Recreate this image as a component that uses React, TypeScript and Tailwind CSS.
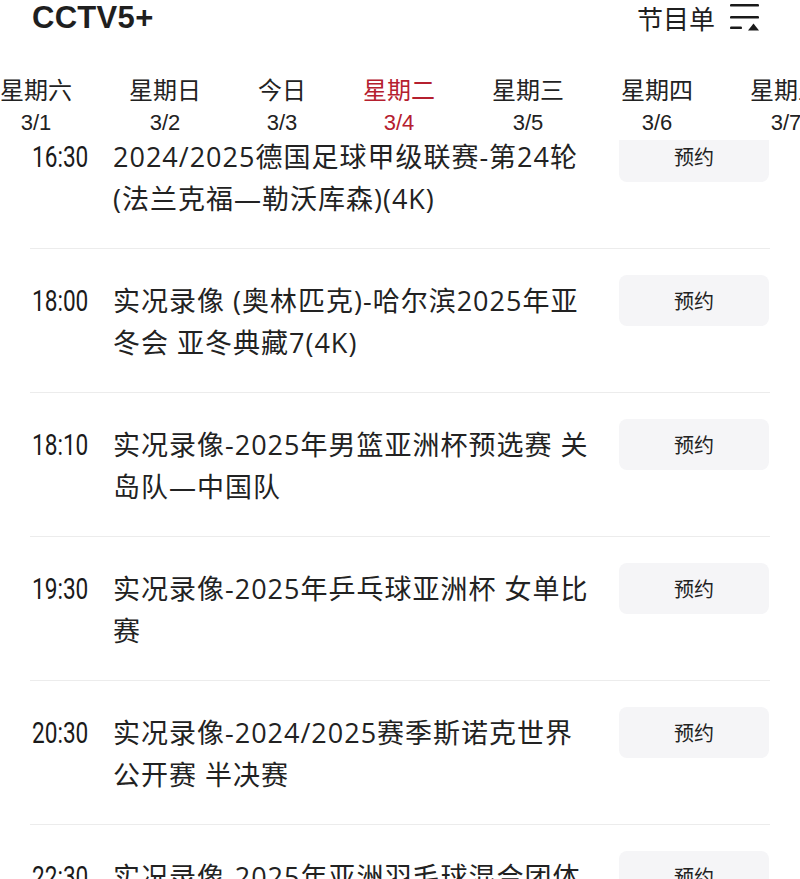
const cjk = "font-['Noto_Sans_CJK_SC',sans-serif]";
const title = "font-['Open_Sans','Noto_Sans_CJK_SC',sans-serif]";

const days = [
  { label: "星期六", date: "3/1" },
  { label: "星期日", date: "3/2" },
  { label: "今日", date: "3/3" },
  { label: "星期二", date: "3/4", active: true },
  { label: "星期三", date: "3/5" },
  { label: "星期四", date: "3/6" },
  { label: "星期五", date: "3/7" },
];

const programs = [
  { time: "16:30", lines: ["2024/2025德国足球甲级联赛-第24轮", "(法兰克福—勒沃库森)(4K)"] },
  { time: "18:00", lines: ["实况录像 (奥林匹克)-哈尔滨2025年亚", "冬会 亚冬典藏7(4K)"] },
  { time: "18:10", lines: ["实况录像-2025年男篮亚洲杯预选赛 关", "岛队—中国队"] },
  { time: "19:30", lines: ["实况录像-2025年乒乓球亚洲杯 女单比", "赛"] },
  { time: "20:30", lines: ["实况录像-2024/2025赛季斯诺克世界", "公开赛 半决赛"] },
  { time: "22:30", lines: ["实况录像-2025年亚洲羽毛球混合团体", "锦标赛 半决赛"] },
];

function ListIcon() {
  return (
    <svg width="32" height="32" viewBox="0 0 32 32" className="block">
      <rect x="2" y="2" width="29" height="2.6" rx="1.2" fill="#1a1a1a" />
      <rect x="2" y="14" width="29" height="2.6" rx="1.2" fill="#1a1a1a" />
      <rect x="2" y="24.5" width="12" height="2.6" rx="1.2" fill="#1a1a1a" />
      <path d="M25.5 21.5 L31 28.5 L20 28.5 Z" fill="#1a1a1a" />
    </svg>
  );
}

export default function App() {
  return (
    <div className="h-[879px] w-[800px] overflow-hidden bg-white text-[#1f1f1f]">
      <div className="relative z-10 h-[140px] bg-white">
        <div className="flex h-[36px] items-center justify-between pl-[32px] pr-[40px]">
          <span className="font-['Liberation_Sans',sans-serif] text-[31px] font-bold tracking-[0.3px]">CCTV5+</span>
          <div className="flex items-center gap-[13px]">
            <span className={`${cjk} text-[26px] leading-none`}>节目单</span>
            <ListIcon />
          </div>
        </div>
        <div className="mt-[38px] flex gap-[57px] whitespace-nowrap">
          {days.map((d) => (
            <div
              key={d.date}
              className={`flex shrink-0 flex-col items-center ${d.active ? "text-[#b5202f]" : "text-[#222]"}`}
            >
              <span className={`${cjk} text-[24px] leading-[30px]`}>{d.label}</span>
              <span className="mt-[4px] font-['Liberation_Sans',sans-serif] text-[22px] leading-[30px]">{d.date}</span>
            </div>
          ))}
        </div>
      </div>

      <div className="-mt-[35px]">
        {programs.map((p) => (
          <div key={p.time} className="mx-[30px] flex items-start border-b border-[#ececec] pt-[31px] pb-[28px]">
            <div className="w-[83px] shrink-0 pl-[2px]">
              <span className="inline-block origin-left scale-x-[0.78] font-['Roboto',sans-serif] text-[29px] leading-[42px] text-[#1a1a1a]">
                {p.time}
              </span>
            </div>
            <div className={`${title} flex-1 text-[27px] leading-[42px] tracking-[1px] text-[#222]`}>
              {p.lines.map((l) => (
                <div key={l} className="whitespace-nowrap">{l}</div>
              ))}
            </div>
            <button className={`${cjk} mt-[-5px] mr-[1px] h-[51px] w-[150px] shrink-0 rounded-[8px] bg-[#f5f5f7] text-[20px] text-[#222]`}>
              预约
            </button>
          </div>
        ))}
      </div>
    </div>
  );
}
